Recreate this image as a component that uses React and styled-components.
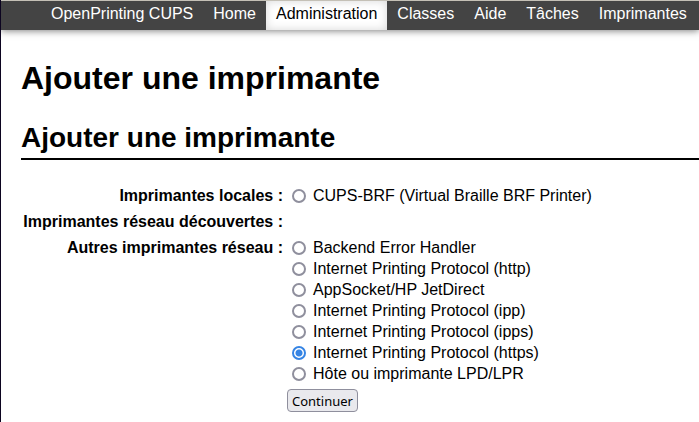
import React from "react";
import styled, { createGlobalStyle } from "styled-components";

const GlobalStyle = createGlobalStyle`
  * { box-sizing: border-box; }
  body {
    margin: 0;
    background: #fff;
    color: #000;
    font-family: "Liberation Sans", Arial, sans-serif;
    font-size: 16px;
    line-height: 21px;
  }
`;

const Page = styled.div`
  min-height: 100vh;
  border-left: 1px solid #0c0420;
  overflow-x: hidden;
`;

const NavBar = styled.nav`
  display: flex;
  padding-left: 40px;
  background: #444;
  border-top: 1px solid #c4c0b6;
  box-shadow: 0 1px 7px rgba(0, 0, 0, 0.5);
`;

const NavLink = styled.a`
  padding: 2px 10px 6px;
  white-space: nowrap;
  text-decoration: none;
  color: ${(p) => (p.$active ? "#000" : "#fff")};
  background: ${(p) => (p.$active ? "#fff" : "transparent")};
  box-shadow: ${(p) => (p.$active ? "inset 0 0 10px rgba(0, 0, 0, 0.16)" : "none")};
`;

const Content = styled.main`
  padding: 28px 0 8px 20px;
`;

const Title = styled.h1`
  margin: 0 0 22px;
  font-size: 32px;
  line-height: 40px;
`;

const Subtitle = styled.h2`
  margin: 0 0 25px;
  padding-bottom: 2px;
  font-size: 28px;
  line-height: 36px;
  border-bottom: 2px solid #000;
`;

const Form = styled.form`
  display: grid;
  grid-template-columns: 262px 1fr;
  column-gap: 4px;
  row-gap: 5px;
`;

const GroupLabel = styled.div`
  text-align: right;
  font-weight: bold;
`;

const Options = styled.div`
  display: flex;
  flex-direction: column;
`;

const Option = styled.label`
  display: flex;
  align-items: center;
  gap: 7px;
  padding-left: 5px;
`;

const Radio = styled.input`
  appearance: none;
  width: 14px;
  height: 14px;
  margin: 0;
  border: 2px solid #8f8f9d;
  border-radius: 50%;
  background: #fff;
  &:checked {
    border-color: #3584e4;
    background: radial-gradient(circle, #3584e4 3px, #fff 4px);
  }
`;

const Submit = styled.button`
  grid-column: 2;
  justify-self: start;
  height: 23px;
  padding: 0 4px;
  border: 1px solid #8f8f9d;
  border-radius: 4px;
  background: #e9e9ed;
  color: #000;
  font: 13px "Noto Sans", sans-serif;
`;

const links = ["OpenPrinting CUPS", "Home", "Administration", "Classes", "Aide", "Tâches", "Imprimantes"];
const groups = [
  { label: "Imprimantes locales :", options: ["CUPS-BRF (Virtual Braille BRF Printer)"] },
  { label: "Imprimantes réseau découvertes :", options: [] },
  {
    label: "Autres imprimantes réseau :",
    options: [
      "Backend Error Handler",
      "Internet Printing Protocol (http)",
      "AppSocket/HP JetDirect",
      "Internet Printing Protocol (ipp)",
      "Internet Printing Protocol (ipps)",
      "Internet Printing Protocol (https)",
      "Hôte ou imprimante LPD/LPR",
    ],
  },
];

export default function App() {
  return (
    <Page>
      <GlobalStyle />
      <NavBar>
        {links.map((l) => (
          <NavLink key={l} href="#" $active={l === "Administration"}>{l}</NavLink>
        ))}
      </NavBar>
      <Content>
        <Title>Ajouter une imprimante</Title>
        <Subtitle>Ajouter une imprimante</Subtitle>
        <Form>
          {groups.map((g, i) => (
            <React.Fragment key={g.label}>
              <GroupLabel id={`group-${i}`}>{g.label}</GroupLabel>
              <Options role="radiogroup" aria-labelledby={`group-${i}`}>
                {g.options.map((o) => (
                  <Option key={o}>
                    <Radio type="radio" name="device" value={o} defaultChecked={o.endsWith("(https)")} />
                    {o}
                  </Option>
                ))}
              </Options>
            </React.Fragment>
          ))}
          <Submit type="submit">Continuer</Submit>
        </Form>
      </Content>
    </Page>
  );
}
